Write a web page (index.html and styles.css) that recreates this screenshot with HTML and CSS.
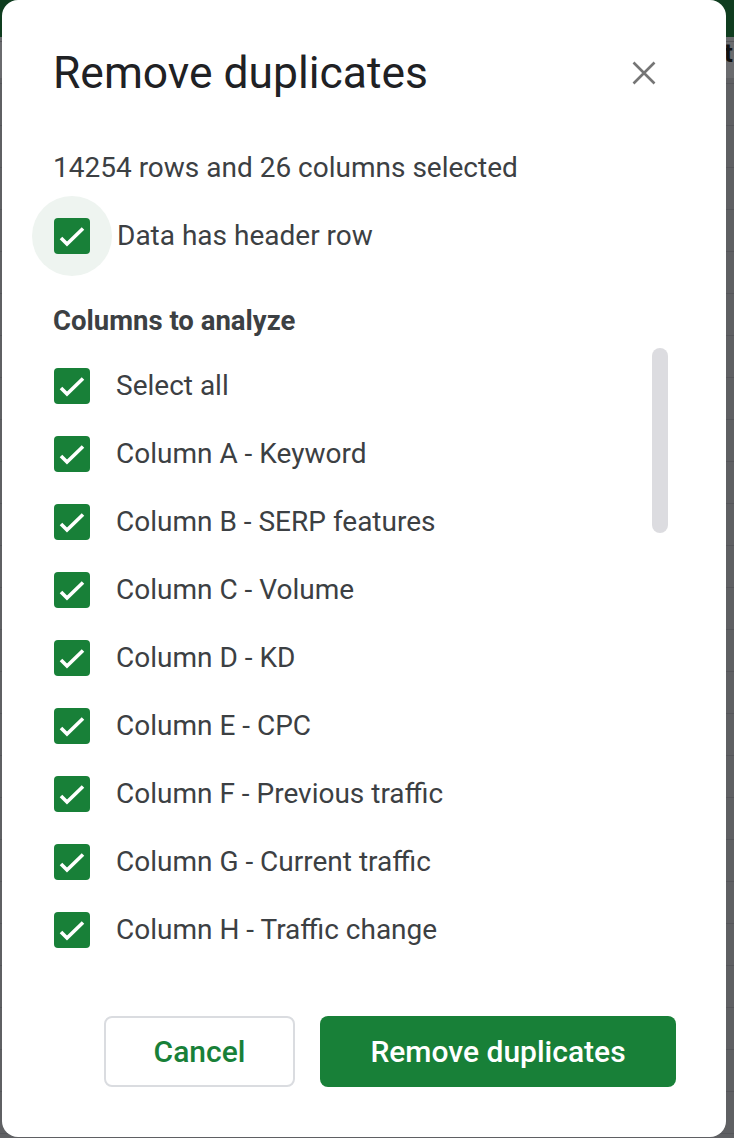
FILE: index.html
```html
<!DOCTYPE html>
<html lang="en">
<head>
<meta charset="utf-8">
<title>Remove duplicates</title>
<link rel="stylesheet" href="styles.css">
</head>
<body>
<span class="bg-glyph">t</span>
<div class="dialog">
  <div class="header">
    <h1 class="title">Remove duplicates</h1>
    <button class="close" aria-label="Close">
      <svg width="36" height="36" viewBox="0 0 36 36"><path d="M7.5 7.5L28.5 28.5M28.5 7.5L7.5 28.5" stroke="#757575" stroke-width="2.6" fill="none"/></svg>
    </button>
  </div>
  <p class="summary">14254 rows and 26 columns selected</p>
  <div class="header-row">
    <span class="halo"><span class="box"><svg width="36" height="36" viewBox="0 0 36 36"><polyline points="7,20 13,26 29,10.5" stroke="#fff" stroke-width="3.6" fill="none"/></svg></span></span>
    <span class="label halo-label">Data has header row</span>
  </div>
  <h2 class="section">Columns to analyze</h2>
  <div class="list-wrap">
    <div class="list">
      <div class="row"><span class="box"><svg width="36" height="36" viewBox="0 0 36 36"><polyline points="7,20 13,26 29,10.5" stroke="#fff" stroke-width="3.6" fill="none"/></svg></span><span class="label">Select all</span></div>
      <div class="row"><span class="box"><svg width="36" height="36" viewBox="0 0 36 36"><polyline points="7,20 13,26 29,10.5" stroke="#fff" stroke-width="3.6" fill="none"/></svg></span><span class="label">Column A - Keyword</span></div>
      <div class="row"><span class="box"><svg width="36" height="36" viewBox="0 0 36 36"><polyline points="7,20 13,26 29,10.5" stroke="#fff" stroke-width="3.6" fill="none"/></svg></span><span class="label">Column B - SERP features</span></div>
      <div class="row"><span class="box"><svg width="36" height="36" viewBox="0 0 36 36"><polyline points="7,20 13,26 29,10.5" stroke="#fff" stroke-width="3.6" fill="none"/></svg></span><span class="label">Column C - Volume</span></div>
      <div class="row"><span class="box"><svg width="36" height="36" viewBox="0 0 36 36"><polyline points="7,20 13,26 29,10.5" stroke="#fff" stroke-width="3.6" fill="none"/></svg></span><span class="label">Column D - KD</span></div>
      <div class="row"><span class="box"><svg width="36" height="36" viewBox="0 0 36 36"><polyline points="7,20 13,26 29,10.5" stroke="#fff" stroke-width="3.6" fill="none"/></svg></span><span class="label">Column E - CPC</span></div>
      <div class="row"><span class="box"><svg width="36" height="36" viewBox="0 0 36 36"><polyline points="7,20 13,26 29,10.5" stroke="#fff" stroke-width="3.6" fill="none"/></svg></span><span class="label">Column F - Previous traffic</span></div>
      <div class="row"><span class="box"><svg width="36" height="36" viewBox="0 0 36 36"><polyline points="7,20 13,26 29,10.5" stroke="#fff" stroke-width="3.6" fill="none"/></svg></span><span class="label">Column G - Current traffic</span></div>
      <div class="row"><span class="box"><svg width="36" height="36" viewBox="0 0 36 36"><polyline points="7,20 13,26 29,10.5" stroke="#fff" stroke-width="3.6" fill="none"/></svg></span><span class="label">Column H - Traffic change</span></div>
    </div>
    <div class="track"><div class="thumb"></div></div>
  </div>
  <div class="actions">
    <button class="btn btn-cancel">Cancel</button>
    <button class="btn btn-primary">Remove duplicates</button>
  </div>
</div>
</body>
</html>
```
FILE: styles.css
```css
html, body {
  margin: 0;
  padding: 0;
}
body {
  position: relative;
  width: 734px;
  height: 1138px;
  overflow: hidden;
  background:
    repeating-linear-gradient(to bottom, transparent 0 41px, #55565a 41px 42px),
    linear-gradient(to bottom, #0f3d1f 0 37px, #6a6b6e 37px 78px, #5f6063 78px);
  font-family: Roboto, "Noto Sans", sans-serif;
}
.bg-glyph {
  position: absolute;
  left: 724px;
  top: 38px;
  font: bold 26px Roboto, sans-serif;
  color: #111;
}
.dialog {
  position: relative;
  margin-left: 2px;
  width: 724px;
  height: 1137px;
  box-sizing: border-box;
  background: #fff;
  border-radius: 16px;
  padding: 47px 58px 0 51px;
  display: flex;
  flex-direction: column;
}
.header {
  display: flex;
  align-items: center;
  justify-content: space-between;
  height: 52px;
}
.title {
  margin: 0;
  font-family: Roboto, sans-serif;
  font-weight: 400;
  font-size: 44.4px;
  line-height: 52px;
  color: #202124;
}
.close {
  border: 0;
  background: none;
  padding: 0;
  margin-right: 6px;
  width: 36px;
  height: 36px;
  display: flex;
}
.summary {
  margin: 51px 0 0 0;
  font-size: 28px;
  line-height: 36px;
  color: #3c4043;
}
.header-row {
  margin-top: 10px;
  display: flex;
  align-items: center;
  height: 80px;
}
.halo {
  width: 80px;
  height: 80px;
  border-radius: 50%;
  background: #eef4f0;
  margin-left: -21px;
  display: flex;
  align-items: center;
  justify-content: center;
  flex: none;
}
.section {
  margin: 27px 0 0 0;
  font-size: 27.5px;
  line-height: 36px;
  font-weight: 700;
  color: #3c4043;
}
.list-wrap {
  margin-top: 9px;
  height: 620px;
  display: flex;
  justify-content: space-between;
}
.list {
  padding-top: 4px;
  display: flex;
  flex-direction: column;
}
.row {
  height: 68px;
  display: flex;
  align-items: center;
}
.box {
  width: 36px;
  height: 36px;
  border-radius: 4px;
  background: #188038;
  display: flex;
  flex: none;
  margin-left: 1px;
}
.label {
  font-size: 28px;
  color: #3c4043;
  margin-left: 26px;
  line-height: 36px;
}
.header-row .halo-label {
  margin-left: 5px;
}
.halo .box {
  margin-left: 0;
}
.track {
  width: 16px;
}
.thumb {
  width: 16px;
  height: 185px;
  border-radius: 8px;
  background: #dcdce0;
}
.actions {
  margin-top: 48px;
  display: flex;
  justify-content: flex-end;
  gap: 25px;
  margin-right: -8px;
}
.btn {
  height: 71px;
  border-radius: 8px;
  font-family: Roboto, sans-serif;
  font-weight: 500;
  font-size: 30px;
  box-sizing: border-box;
  padding: 0;
}
.btn-cancel {
  width: 191px;
  background: #fff;
  border: 2px solid #dadce0;
  color: #188038;
}
.btn-primary {
  width: 356px;
  background: #188038;
  border: 0;
  color: #fff;
}
```
